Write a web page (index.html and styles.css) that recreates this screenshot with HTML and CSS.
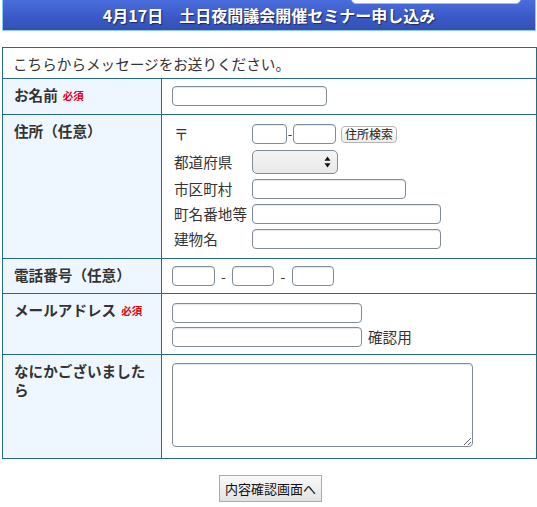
FILE: index.html
```html
<!DOCTYPE html>
<html lang="ja">
<head>
<meta charset="utf-8">
<title>4月17日　土日夜間議会開催セミナー申し込み</title>
<link rel="stylesheet" href="styles.css">
</head>
<body>
<div class="page">
  <div class="tab"></div>
  <h1 class="header">4月17日　土日夜間議会開催セミナー申し込み</h1>

  <table class="form">
    <colgroup><col class="c1"><col class="c2"></colgroup>
    <tr class="r0">
      <td colspan="2" class="intro">こちらからメッセージをお送りください。</td>
    </tr>
    <tr class="r1">
      <th>お名前<span class="req">必須</span></th>
      <td class="cell"><input class="inp w-name" type="text"></td>
    </tr>
    <tr class="r2">
      <th>住所（任意）</th>
      <td class="cell addr-cell">
        <div class="addr">
          <span class="alabel">〒</span>
          <div class="zip">
            <input class="inp w-zip1" type="text">
            <span class="zdash">-</span>
            <input class="inp w-zip2" type="text">
            <button class="search" type="button">住所検索</button>
          </div>
          <span class="alabel">都道府県</span>
          <div class="selwrap">
            <select class="sel"><option></option></select>
            <svg class="arrows" width="7" height="12" viewBox="0 0 7 12"><path d="M3.5 0.5 L6.5 4.8 L0.5 4.8 Z M3.5 11.5 L6.5 7.2 L0.5 7.2 Z" fill="#111"/></svg>
          </div>
          <span class="alabel">市区町村</span>
          <input class="inp w-city" type="text">
          <span class="alabel">町名番地等</span>
          <input class="inp w-long" type="text">
          <span class="alabel">建物名</span>
          <input class="inp w-long" type="text">
        </div>
      </td>
    </tr>
    <tr class="r3">
      <th>電話番号（任意）</th>
      <td class="cell tel-cell">
        <div class="tel">
          <input class="inp w-tel1" type="text"><span class="tdash">-</span><input class="inp w-tel" type="text"><span class="tdash t2">-</span><input class="inp w-tel" type="text">
        </div>
      </td>
    </tr>
    <tr class="r4">
      <th>メールアドレス<span class="req">必須</span></th>
      <td class="cell mail-cell">
        <input class="inp w-mail" type="text">
        <div class="confirm"><input class="inp w-mail" type="text"><span class="clabel">確認用</span></div>
      </td>
    </tr>
    <tr class="r5">
      <th>なにかございましたら</th>
      <td class="cell msg-cell"><textarea class="msg"></textarea></td>
    </tr>
  </table>

  <div class="actions"><button class="submit" type="button">内容確認画面へ</button></div>
</div>
</body>
</html>
```

FILE: styles.css
```css
html, body {
  margin: 0;
  padding: 0;
  background: #fff;
}
body {
  font-family: "Noto Sans CJK JP", "Noto Sans", sans-serif;
  font-size: 14.6px;
  color: #333;
}
.page {
  position: relative;
  padding: 0 1px 0 2px;
}
.tab {
  position: absolute;
  top: -8px;
  left: 351px;
  width: 168px;
  height: 10px;
  background: #fff;
  border: 1px solid #a9bccb;
  border-radius: 0 0 5px 5px;
  z-index: 2;
}
.header {
  margin: 0;
  height: 31px;
  box-sizing: border-box;
  border: 1px solid #8ccaee;
  border-top: none;
  background: linear-gradient(#4a6ddc, #3a59c6 60%, #3350b2);
  color: #fff;
  font-size: 16px;
  font-weight: bold;
  text-align: center;
  line-height: 30px;
  text-shadow: 1px 1px 1px #1b2766;
  position: relative;
  z-index: 1;
}
.form {
  margin-top: 16px;
  width: 534px;
  border-collapse: collapse;
  table-layout: fixed;
  border: 1px solid #25698f;
}
.c1 { width: 159px; }
.c2 { width: 375px; }
.form th, .form td {
  border: 1px solid #25698f;
  padding: 0;
}
.intro {
  height: 30px;
  padding: 0 10px !important;
  line-height: 29px;
  background: #fff;
}
.form th {
  background: #eef7ff;
  text-align: left;
  vertical-align: top;
  font-weight: bold;
  padding: 6px 12px 0 11px !important;
  line-height: 19px;
}
.req {
  color: #e60012;
  font-size: 10.5px;
  font-weight: bold;
  margin-left: 5px;
  vertical-align: 1px;
}
.cell {
  background: #fff;
  vertical-align: top;
  padding-left: 10px !important;
}
.r1 .cell { padding-top: 7px !important; padding-bottom: 8px !important; }
.inp {
  box-sizing: border-box;
  display: block;
  height: 20px;
  margin: 0;
  padding: 0 3px;
  border: 1px solid #7f8c98;
  border-radius: 4px;
  background: #fff;
  box-shadow: inset 0 1px 1px rgba(0,0,0,0.10);
  font: inherit;
}
.w-name { width: 155px; }
.addr-cell { padding-top: 9px !important; padding-bottom: 9px !important; }
.addr {
  display: grid;
  grid-template-columns: 78px auto;
  row-gap: 5px;
  align-items: center;
  padding-left: 2px;
  line-height: 20px;
}
.alabel { white-space: nowrap; }
.zip {
  display: flex;
  align-items: center;
}
.w-zip1 { width: 35px; }
.w-zip2 { width: 43px; }
.zdash { width: 6px; text-align: center; font-size: 13px; }
.search {
  margin-left: 5px;
  height: 17px;
  box-sizing: border-box;
  padding: 0 3px;
  font-family: inherit;
  font-size: 12px;
  line-height: 14px;
  color: #222;
  border: 1px solid #b5b5b5;
  border-radius: 4px;
  background: linear-gradient(#ffffff, #ececec);
}
.selwrap {
  position: relative;
  width: 86px;
  height: 24px;
  margin-top: 1px;
}
.sel {
  appearance: none;
  -webkit-appearance: none;
  box-sizing: border-box;
  width: 86px;
  height: 24px;
  margin: 0;
  border: 1px solid #7f8c98;
  border-radius: 5px;
  background: linear-gradient(#f4f4f4, #e8e8e8);
}
.arrows {
  position: absolute;
  right: 7px;
  top: 6px;
}
.w-city { width: 154px; }
.w-long { width: 189px; }
.tel-cell { padding-top: 7px !important; padding-bottom: 7px !important; }
.tel {
  display: flex;
  align-items: center;
}
.w-tel1 { width: 43px; }
.w-tel { width: 42px; }
.tdash { width: 17px; text-align: center; font-size: 14px; }
.tdash.t2 { width: 18px; }
.mail-cell { padding-top: 9px !important; padding-bottom: 7px !important; }
.w-mail { width: 190px; }
.confirm {
  display: flex;
  align-items: center;
  margin-top: 4px;
}
.clabel { margin-left: 6px; line-height: 20px; }
.msg-cell { padding-top: 8px !important; padding-bottom: 11px !important; }
.msg {
  display: block;
  box-sizing: border-box;
  width: 301px;
  height: 84px;
  margin: 0;
  border: 1px solid #7f8c98;
  border-radius: 4px;
  box-shadow: inset 0 1px 1px rgba(0,0,0,0.10);
  font: inherit;
}
.actions {
  text-align: center;
  margin-top: 16px;
}
.submit {
  height: 27px;
  box-sizing: border-box;
  padding: 0 5px;
  margin-left: 3px;
  font-family: inherit;
  font-size: 13px;
  color: #111;
  border: 1px solid #ababab;
  border-radius: 0;
  background: linear-gradient(#fafafa, #e2e2e2);
}
```
